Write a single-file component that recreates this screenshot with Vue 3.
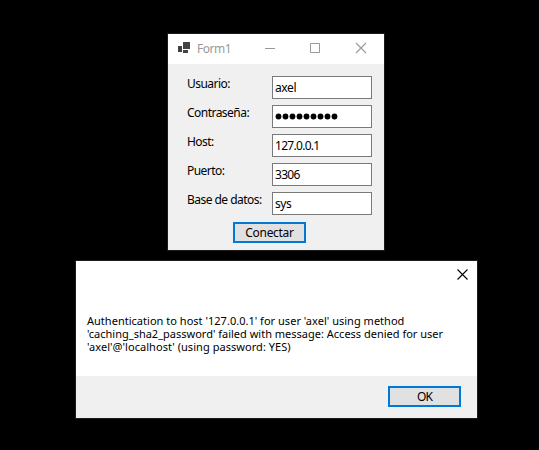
<script setup>
import { ref } from 'vue'

const fields = ref([
  { id: 'usuario', label: 'Usuario:', value: 'axel' },
  { id: 'contrasena', label: 'Contraseña:', value: 'password1', secret: true },
  { id: 'host', label: 'Host:', value: '127.0.0.1' },
  { id: 'puerto', label: 'Puerto:', value: '3306' },
  { id: 'base', label: 'Base de datos:', value: 'sys' },
])
</script>

<template>
  <main class="desktop">
    <section class="window form-window">
      <header class="titlebar">
        <svg class="app-icon" width="13" height="12" viewBox="0 0 13 12" fill="#424242">
          <path d="M5 0h7v7H5zM0 4h4v6H0zM5 8h5v3H5z" />
        </svg>
        <span class="title">Form1</span>
        <svg class="controls" width="104" height="12" viewBox="0 0 104 12" fill="none" stroke="#999">
          <path d="M0 6.5h10M45.500 1.500h9v9h-9z" />
          <path d="M91 1l10 10M101 1l-10 10" stroke-width="1.100" />
        </svg>
      </header>
      <div class="fields">
        <div v-for="field in fields" :key="field.id" class="row">
          <span class="label" :class="field.id">{{ field.label }}</span>
          <div class="input" :class="field.id">
            <svg v-if="field.secret" width="64" height="7" viewBox="0 0 64 7">
              <circle v-for="(ch, i) in field.value" :key="i" :cx="3.500 + i * 7" cy="3.500" r="2.900" />
            </svg>
            <span v-else>{{ field.value }}</span>
          </div>
        </div>
      </div>
      <button class="btn connect">Conectar</button>
    </section>

    <section class="window dialog">
      <div class="dialog-body">
        <svg class="close" width="11" height="11" viewBox="0 0 11 11" stroke="#000" stroke-width="1.100">
          <path d="M.5 .5l10 10M10.500 .5l-10 10" />
        </svg>
        <p class="message">
          <span class="line-a">Authentication to host '127.0.0.1' for user 'axel' using method</span>
          <span class="line-b">'caching_sha2_password' failed with message: Access denied for user</span>
          <span class="line-c">'axel'@'localhost' (using password: YES)</span>
        </p>
      </div>
      <footer class="dialog-footer">
        <button class="btn ok">OK</button>
      </footer>
    </section>
  </main>
</template>

<style>
body {
  margin: 0;
  background: #000;
}
</style>

<style scoped>
.desktop {
  box-sizing: border-box;
  width: 539px;
  height: 450px;
  padding-top: 33px;
  display: flex;
  flex-direction: column;
  overflow: hidden;
  background: #000;
  color: #000;
  font: 12px/16px "Noto Sans", "Open Sans", sans-serif;
}
.window {
  box-sizing: border-box;
  border: 1px solid #1c1c1c;
  background: #f0f0f0;
  flex: none;
}
.form-window {
  width: 218px;
  height: 218px;
  margin-left: 167px;
}
.titlebar {
  display: flex;
  height: 30px;
  background: #fff;
}
.app-icon {
  margin: 8px 0 0 10px;
}
.title {
  width: 35px;
  margin: 7px 0 0 6px;
  color: #999;
  letter-spacing: -0.5px;
  white-space: nowrap;
}
.controls {
  margin: 8px 0 0 33px;
}
.fields {
  display: flex;
  flex-direction: column;
  gap: 6px;
  padding: 12px 0 0 19px;
}
.row {
  display: flex;
  height: 23px;
}
.label {
  width: 85px;
  letter-spacing: -0.53px;
  white-space: nowrap;
}
.input {
  box-sizing: border-box;
  display: flex;
  align-items: center;
  width: 100px;
  height: 23px;
  padding-left: 2px;
  border: 1px solid #7a7a7a;
  background: #fff;
  letter-spacing: -0.4px;
}
.input.host,
.input.puerto {
  letter-spacing: -0.7px;
}
.btn {
  box-sizing: border-box;
  display: flex;
  align-items: center;
  justify-content: center;
  width: 73px;
  height: 21px;
  padding: 0;
  border: 2px solid #0078d7;
  border-radius: 0;
  background: #e1e1e1;
  color: #000;
  font: inherit;
  letter-spacing: -0.3px;
}
.ok {
  letter-spacing: -0.8px;
}
.connect {
  margin: 7px 0 0 65px;
}
.dialog {
  width: 403px;
  height: 159px;
  margin: 9px 0 0 75px;
}
.dialog-body {
  display: flex;
  flex-direction: column;
  height: 115px;
  background: #fff;
}
.close {
  align-self: flex-end;
  margin: 8px 9px 0 0;
}
.message {
  display: flex;
  flex-direction: column;
  margin: 34px 0 0 11px;
  font-size: 11px;
  line-height: 13px;
  white-space: nowrap;
}
.line-a {
  letter-spacing: 0.02px;
}
.line-c {
  letter-spacing: 0.05px;
}
.dialog-footer {
  display: flex;
  justify-content: flex-end;
  padding: 10px 16px 0 0;
}
</style>
